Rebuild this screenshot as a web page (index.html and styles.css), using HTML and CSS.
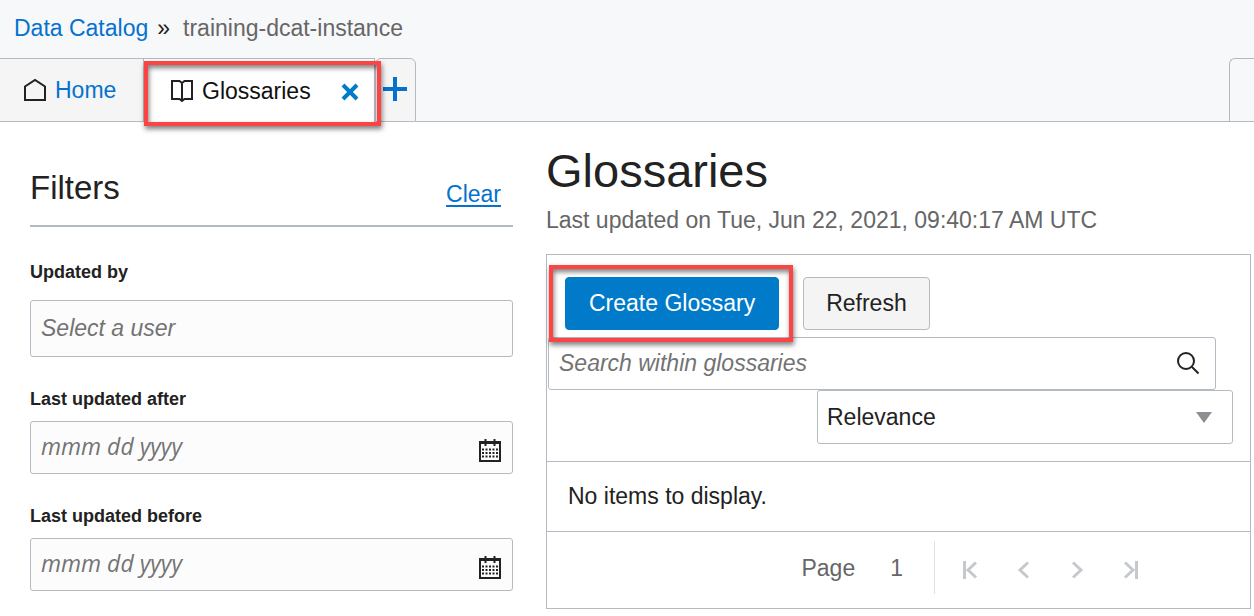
FILE: index.html
```
<!DOCTYPE html>
<html lang="en">
<head>
<meta charset="utf-8">
<title>Data Catalog - Glossaries</title>
<link rel="stylesheet" href="styles.css">
</head>
<body>
<header class="top">
  <nav class="crumbs" aria-label="Breadcrumb">
    <a href="#">Data Catalog</a><span class="sep">»</span><span class="current">training-dcat-instance</span>
  </nav>
  <nav class="tabs" aria-label="Open tabs">
    <a class="tab home" href="#">
      <svg width="24" height="24" viewBox="0 0 24 24" fill="none" stroke="#222" stroke-width="2"><path d="M2 22V8.500L12 2L22 8.500V22Z"/></svg>
      <span>Home</span>
    </a>
    <div class="tab active">
      <svg width="24" height="24" viewBox="0 0 24 24" fill="none" stroke="#222" stroke-width="2"><path d="M12 4L9.500 2H2V20H9.500L12 22L14.500 20H22V2H14.500ZM12 4V22"/></svg>
      <span>Glossaries</span>
      <button class="close" type="button" aria-label="Close tab">
        <svg width="18" height="18" viewBox="0 0 18 18" fill="none" stroke="#007ac9" stroke-width="4"><path d="M2 2L16 16M16 2L2 16"/></svg>
      </button>
      <i class="mark mark-tab"></i>
    </div>
    <button class="add" type="button" aria-label="Add tab">
      <svg width="24" height="24" viewBox="0 0 24 24" fill="none" stroke="#0572ce" stroke-width="4"><path d="M12 0V24M0 12H24"/></svg>
    </button>
    <div class="rest"></div>
    <div class="edge"></div>
  </nav>
</header>
<main class="page">
  <form class="filters">
    <div class="filters-head">
      <h2>Filters</h2>
      <a href="#">Clear</a>
    </div>
    <div class="field user">
      <label for="user">Updated by</label>
      <input id="user" type="text" placeholder="Select a user">
    </div>
    <div class="field date">
      <label for="after">Last updated after</label>
      <div class="box">
        <input id="after" type="text" placeholder="mmm dd yyyy">
        <button type="button" aria-label="Choose date after"><svg width="22" height="23" viewBox="0 0 22 23"><path d="M1 3V22H21V3" fill="none" stroke="#222" stroke-width="2"/><path d="M0 3.500H22" stroke="#222" stroke-width="3"/><path d="M6.500 0V7M15.500 0V7" stroke="#222" stroke-width="2"/><path d="M3 10.500H19M3 14H19M3 17.500H19" stroke="#222" stroke-width="2" stroke-dasharray="2 1.500"/></svg></button>
      </div>
    </div>
    <div class="field date">
      <label for="before">Last updated before</label>
      <div class="box">
        <input id="before" type="text" placeholder="mmm dd yyyy">
        <button type="button" aria-label="Choose date before"><svg width="22" height="23" viewBox="0 0 22 23"><path d="M1 3V22H21V3" fill="none" stroke="#222" stroke-width="2"/><path d="M0 3.500H22" stroke="#222" stroke-width="3"/><path d="M6.500 0V7M15.500 0V7" stroke="#222" stroke-width="2"/><path d="M3 10.500H19M3 14H19M3 17.500H19" stroke="#222" stroke-width="2" stroke-dasharray="2 1.500"/></svg></button>
      </div>
    </div>
  </form>
  <section class="content">
    <h1>Glossaries</h1>
    <p class="updated">Last updated on Tue, Jun 22, 2021, 09:40:17 AM UTC</p>
    <div class="panel">
      <div class="toolbar">
        <div class="actions">
          <div class="primary-wrap">
            <button class="btn primary" type="button">Create Glossary</button>
            <i class="mark mark-create"></i>
          </div>
          <button class="btn" type="button">Refresh</button>
        </div>
        <div class="search">
          <input type="text" placeholder="Search within glossaries" aria-label="Search within glossaries">
          <button type="button" aria-label="Search"><svg width="24" height="24" viewBox="0 0 24 24" fill="none" stroke="#222" stroke-width="2"><circle cx="10" cy="10" r="8"/><path d="M16 16L22.500 22.500"/></svg></button>
        </div>
        <div class="sort">
          <select aria-label="Sort by"><option>Relevance</option></select>
          <svg width="16" height="11" viewBox="0 0 16 11"><path d="M0 0H16L8 11Z" fill="#8b8e92"/></svg>
        </div>
      </div>
      <p class="empty">No items to display.</p>
      <nav class="pager" aria-label="Pagination">
        <span class="page-label">Page</span>
        <span class="page-number">1</span>
        <div class="page-buttons">
          <button type="button" aria-label="First page" disabled><svg width="16" height="18" viewBox="0 0 16 18"><path d="M3.500 0V18M15 1.500L7 9L15 16.500"/></svg></button>
          <button type="button" aria-label="Previous page" disabled><svg width="16" height="18" viewBox="0 0 16 18"><path d="M13 1.500L5 9L13 16.500"/></svg></button>
          <button type="button" aria-label="Next page" disabled><svg width="16" height="18" viewBox="0 0 16 18"><path d="M4 1.500L12 9L4 16.500"/></svg></button>
          <button type="button" aria-label="Last page" disabled><svg width="16" height="18" viewBox="0 0 16 18"><path d="M13.500 0V18M2 1.500L10 9L2 16.500"/></svg></button>
        </div>
      </nav>
    </div>
  </section>
</main>
</body>
</html>
```

FILE: styles.css
```
* { box-sizing: border-box; }
body {
  margin: 0;
  background: #fff;
  color: #222;
  font: 23px/28px "Liberation Sans", Arial, sans-serif;
}
h1, h2, p { margin: 0; font-weight: 400; }
a { color: #0572ce; text-decoration: none; }
svg { display: block; flex: none; }
button, input, select { font: inherit; color: inherit; margin: 0; border-radius: 3px; }
button { border: 0; background: none; padding: 0; }
input, select { border: 1px solid #b4bac2; min-width: 0; }
input::placeholder { color: #737373; font-style: italic; opacity: 1; }

.top { background: #f7f8fa; }
.crumbs { display: flex; padding: 14px 14px 16px; }
.sep { padding: 0 13px 0 9px; }
.current { color: #666; }

.tabs { display: flex; height: 64px; }
.tab {
  display: flex;
  align-items: center;
  gap: 8px;
  border-top: 1px solid #b4bac2;
  border-right: 1px solid #b4bac2;
}
.home { width: 144px; padding-left: 23px; background: #f5f5f5; border-bottom: 1px solid #b4bac2; }
.active { position: relative; width: 231px; padding-left: 26px; background: #fff; color: #111; }
.close { margin-left: 22px; padding-top: 2px; }
.add {
  display: grid;
  justify-content: center;
  align-content: center;
  width: 41px;
  padding: 0 2px 3px 0;
  background: #f5f5f5;
  border: 1px solid #b4bac2;
  border-radius: 6px 6px 0 0;
}
.rest { flex: 1; border-bottom: 1px solid #b4bac2; }
.edge {
  width: 25px;
  border: 1px solid #b4bac2;
  border-right: 0;
  border-radius: 6px 0 0 0;
}

/* Callout frames drawn over the highlighted controls */
.mark {
  position: absolute;
  z-index: 1;
  border: 4px solid #fc4444;
  box-shadow: 1px 3px 5px rgba(0, 0, 0, .5), inset 1px 3px 5px rgba(0, 0, 0, .5);
  pointer-events: none;
}
.mark-tab { inset: 2px -7px -4px 0; }
.mark-create { inset: -12px -14px -12px -16px; }

.page {
  display: grid;
  grid-template-columns: 483px minmax(0, 1fr);
  gap: 33px;
  padding: 0 3px 8px 30px;
}
.filters { padding-top: 46px; }
.filters-head {
  display: flex;
  justify-content: space-between;
  align-items: flex-end;
  height: 59px;
  padding: 0 12px 17px 0;
  border-bottom: 2px solid #b4bac2;
}
.filters-head h2 { font-size: 33px; line-height: 40px; }
.filters-head a { text-decoration: underline; text-decoration-thickness: 2px; text-underline-offset: 3px; }
.field { display: flex; flex-direction: column; }
.field label { font-size: 18px; font-weight: 700; line-height: 24px; }
.field input { width: 100%; background: #fcfcfc; }
.user { gap: 16px; padding-top: 33px; }
.user input { height: 57px; padding: 0 10px; }
.date { gap: 10px; padding-top: 30px; }
.date input { height: 53px; padding: 0 48px 4px 10px; font-family: "Open Sans", sans-serif; }
.box, .search, .sort { position: relative; }
.box button { position: absolute; right: 12px; top: 18px; }

.content { padding-top: 21px; }
.content h1 { font-size: 47px; line-height: 56px; }
.updated { padding: 7px 0 20px; color: #666; }
.panel { border: 1px solid #b4bac2; }
.toolbar { display: flex; flex-direction: column; padding: 22px 17px 17px 1px; }
.actions { display: flex; gap: 24px; padding: 0 17px 7px; }
.primary-wrap { position: relative; }
.btn { height: 53px; padding: 0 22px 2px; background: #f4f4f4; border: 1px solid #b4bac2; border-radius: 4px; }
.primary { padding: 0 23px 2px; background: #007ac9; border-color: #007ac9; color: #fff; }
.search { margin-right: 17px; }
.search input { display: block; width: 100%; height: 53px; padding: 0 50px 0 10px; background: #fff; }
.search button { position: absolute; right: 16px; top: 14px; }
.sort { width: 416px; align-self: flex-end; }
.sort select { display: block; width: 100%; height: 54px; padding: 0 40px 0 9px; background: #fff; appearance: none; }
.sort svg { position: absolute; right: 21px; top: 22px; pointer-events: none; }
.empty { padding: 20px 21px 21px; border-top: 1px solid #b4bac2; }
.pager {
  display: flex;
  justify-content: flex-end;
  align-items: center;
  padding: 9px 103px 14px 0;
  border-top: 1px solid #b4bac2;
  color: #666;
}
.page-number { padding: 0 31px 0 35px; }
.page-buttons {
  display: flex;
  align-items: center;
  gap: 38px;
  height: 53px;
  padding: 4px 8px 0 26px;
  border-left: 1px solid #dfe1e4;
}
.page-buttons svg { fill: none; stroke: #c5c9ce; stroke-width: 3; }
```
